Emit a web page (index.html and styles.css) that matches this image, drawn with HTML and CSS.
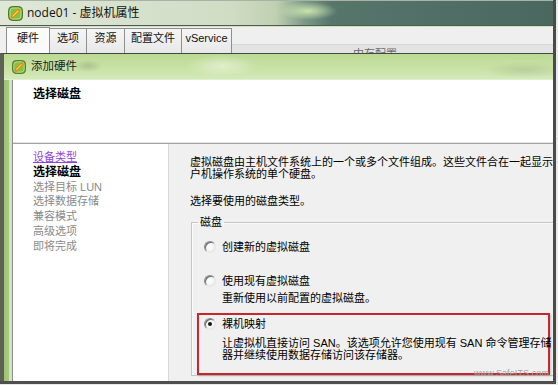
FILE: index.html
```html
<!DOCTYPE html>
<html lang="zh-CN">
<head>
<meta charset="utf-8">
<title>node01 - 虚拟机属性</title>
<link rel="stylesheet" href="styles.css">
</head>
<body>
<div class="screen">
  <div class="titlebar">
    <svg class="appicon" width="15" height="15" viewBox="0 0 15 15">
      <rect x="0.5" y="0.5" width="14" height="14" rx="4" fill="#6fa83a" stroke="#4a7a22"/>
      <rect x="2" y="2" width="11" height="11" rx="3" fill="#86c04a" stroke="#c6e59c" stroke-width="0.8"/>
      <path d="M4.2 10.8 L10.8 4.2" stroke="#e08a10" stroke-width="3.2" stroke-linecap="round"/>
      <path d="M5 10 L10 5" stroke="#ffd54a" stroke-width="1.2" stroke-linecap="round"/>
    </svg>
    <span class="title-text">node01 - 虚拟机属性</span>
  </div>
  <div class="tabstrip">
    <div class="tab active w1">硬件</div>
    <div class="tab w2">选项</div>
    <div class="tab w3">资源</div>
    <div class="tab w4">配置文件</div>
    <div class="tab w5">vService</div>
    <div class="tabpanel"><span class="ghost">内存配置</span></div>
  </div>
  <div class="inner">
    <div class="inner-title">
      <svg class="appicon" width="14" height="14" viewBox="0 0 15 15">
        <rect x="0.5" y="0.5" width="14" height="14" rx="4" fill="#6fa83a" stroke="#4a7a22"/>
        <rect x="2" y="2" width="11" height="11" rx="3" fill="#86c04a" stroke="#c6e59c" stroke-width="0.8"/>
        <path d="M4.2 10.8 L10.8 4.2" stroke="#e08a10" stroke-width="3.2" stroke-linecap="round"/>
        <path d="M5 10 L10 5" stroke="#ffd54a" stroke-width="1.2" stroke-linecap="round"/>
      </svg>
      <span class="inner-title-text">添加硬件</span>
    </div>
    <div class="inner-body">
      <div class="frame-left"></div>
      <div class="client">
        <div class="header">选择磁盘</div>
        <div class="main">
          <div class="nav">
            <div class="nav-item link">设备类型</div>
            <div class="nav-item current">选择磁盘</div>
            <div class="nav-item">选择目标 LUN</div>
            <div class="nav-item">选择数据存储</div>
            <div class="nav-item">兼容模式</div>
            <div class="nav-item">高级选项</div>
            <div class="nav-item">即将完成</div>
          </div>
          <div class="content">
            <p class="intro">虚拟磁盘由主机文件系统上的一个或多个文件组成。这些文件合在一起显示为客<br>户机操作系统的单个硬盘。</p>
            <p class="choose">选择要使用的磁盘类型。</p>
            <fieldset class="group">
              <legend>磁盘</legend>
              <div class="opt first"><span class="radio"></span><span>创建新的虚拟磁盘</span></div>
              <div class="opt second"><span class="radio"></span><span>使用现有虚拟磁盘</span></div>
              <div class="desc">重新使用以前配置的虚拟磁盘。</div>
              <div class="highlight">
                <div class="opt-in"><span class="radio on"></span><span>裸机映射</span></div>
                <div class="desc-in">让虚拟机直接访问 SAN。该选项允许您使用现有 SAN 命令管理存储<br>器并继续使用数据存储访问该存储器。</div>
              </div>
            </fieldset>
          </div>
        </div>
      </div>
    </div>
  </div>
  <div class="watermark">www.SafeITS.com</div>
</div>
</body>
</html>
```
FILE: styles.css
```css
html, body {
  margin: 0;
  padding: 0;
}
body {
  width: 558px;
  height: 385px;
  overflow: hidden;
  background: #e9e9e9;
  font-family: "Liberation Sans", "Noto Sans CJK SC", sans-serif;
  font-size: 11px;
  color: #000;
}
.screen {
  position: relative;
  width: 553px;
  height: 381px;
  border-right: 3px solid #4a4a4a;
  border-bottom: 3px solid #4f4f4f;
  display: flex;
  flex-direction: column;
  overflow: hidden;
  background: #ececec;
}
.titlebar {
  height: 25px;
  flex: none;
  box-sizing: border-box;
  border-top: 1px solid #a9b3a5;
  display: flex;
  align-items: center;
  gap: 4px;
  padding-left: 8px;
  background:
    radial-gradient(ellipse 30px 9px at 308px 10px, rgba(205,232,175,0.95), rgba(205,232,175,0) 100%),
    linear-gradient(to right, #dfe8d8 0, #d0dcc4 42%, #bfd0b0 50%, #7d9a88 55%, #56756b 60%, #4b6860 100%);
}
.appicon {
  flex: none;
  display: block;
}
.title-text {
  font-family: "Open Sans", "Noto Sans CJK SC", sans-serif;
  font-size: 12px;
  line-height: 14px;
  color: #111;
}
.tabstrip {
  height: 28px;
  flex: none;
  box-sizing: border-box;
  border-top: 1px solid #4f5b52;
  box-shadow: inset 0 1px 0 #cfe2bb;
  padding: 2px 0 0 6px;
  display: flex;
  align-items: flex-start;
  background: #efefef;
  overflow: hidden;
}
.tab {
  height: 26px;
  box-sizing: border-box;
  border: 1px solid #8d8f91;
  border-bottom: none;
  margin-right: -1px;
  text-align: center;
  line-height: 19px;
  background: linear-gradient(#f5f5f5, #e8e8e8);
  color: #111;
  flex: none;
}
.tab.active {
  background: #fbfbfb;
  margin-top: -1px;
  line-height: 21px;
  height: 27px;
}
.w1 { width: 44px; }
.w2 { width: 38px; }
.w3 { width: 39px; }
.w4 { width: 58px; }
.w5 { width: 51px; }
.tabpanel {
  flex: 1;
  align-self: stretch;
  margin-top: 16px;
  margin-left: 1px;
  background: #e3e3e3;
  border-top: 1px solid #d6d6d6;
  padding: 3px 0 0 121px;
  line-height: 12px;
  overflow: hidden;
}
.ghost {
  color: #6a6a6a;
}
.inner {
  flex: 1;
  min-height: 0;
  display: flex;
  flex-direction: column;
  border-top: 1px solid #3f4b41;
  border-left: 4px solid #5e6155;
}
.inner-title {
  height: 25px;
  flex: none;
  display: flex;
  align-items: center;
  gap: 5px;
  padding-left: 8px;
  background:
    radial-gradient(ellipse 14px 6px at 84px 12px, rgba(120,140,110,0.35), rgba(120,140,110,0) 100%),
    radial-gradient(ellipse 36px 11px at 218px 12px, rgba(235,245,220,0.7), rgba(235,245,220,0) 100%),
    radial-gradient(ellipse 40px 8px at 520px 16px, rgba(150,170,130,0.35), rgba(150,170,130,0) 100%),
    linear-gradient(#bcd994, #c8e1a5 55%, #d4e9b9);
  border-bottom: 1px solid #e2efcf;
}
.inner-title-text {
  font-size: 11.5px;
  line-height: 13px;
  color: #1a1a1a;
}
.inner-body {
  flex: 1;
  min-height: 0;
  display: flex;
}
.frame-left {
  width: 9px;
  flex: none;
  background: linear-gradient(to right, #9fc272 0, #a8c97c 5px, #d3e2c2 5px, #d3e2c2 8px, #8e8e8e 8px, #8e8e8e 9px);
}
.client {
  flex: 1;
  min-width: 0;
  display: flex;
  flex-direction: column;
}
.header {
  height: 64px;
  flex: none;
  box-sizing: border-box;
  background: #fff;
  border-bottom: 1px solid #a3a3a3;
  box-shadow: inset 0 -1px 0 #e4e4e4;
  padding: 8px 0 0 20px;
  font-weight: bold;
  font-size: 12px;
  line-height: 12px;
}
.main {
  flex: 1;
  min-height: 0;
  display: flex;
}
.nav {
  width: 156px;
  flex: none;
  box-sizing: border-box;
  background: #fff;
  border-right: 1px solid #d9d9d9;
  padding: 6px 0 0 20px;
  line-height: 14.8px;
}
.nav-item {
  color: #8a8a8a;
  white-space: nowrap;
}
.nav-item.link {
  color: #8e46da;
  text-decoration: underline;
}
.nav-item.current {
  color: #000;
  font-weight: bold;
  font-size: 12px;
}
.content {
  flex: 1;
  min-width: 0;
  background: #f0f0f0;
  padding: 12px 0 0 21px;
  line-height: 12px;
  overflow: hidden;
}
.intro {
  margin: 0;
  white-space: nowrap;
}
.choose {
  margin: 15px 0 0;
}
.group {
  margin: 9px 0 0 1px;
  width: 400px;
  padding: 0 0 0 6px;
  border: 1px solid #c6c6c6;
  box-shadow: inset 1px 1px 0 #fbfbfb;
  min-width: 0;
}
.group legend {
  padding: 0 2px;
  line-height: 12px;
}
.opt {
  display: flex;
  align-items: center;
  gap: 6px;
  margin-left: 6px;
  height: 12px;
}
.opt.first {
  margin-top: 13px;
}
.opt.second {
  margin-top: 22px;
}
.desc {
  margin: 5px 0 0 24px;
}
.radio {
  width: 12px;
  height: 12px;
  flex: none;
  box-sizing: border-box;
  border-radius: 50%;
  border: 1px solid;
  border-color: #8c8c8c #e6e6e6 #e6e6e6 #8c8c8c;
  box-shadow: inset 1px 1px 0 #6a6a6a;
  background: radial-gradient(circle at 45% 45%, #ffffff 0, #f6f6f6 45%, #dedede 100%);
  display: flex;
  align-items: center;
  justify-content: center;
}
.radio.on::after {
  content: "";
  width: 4px;
  height: 4px;
  border-radius: 50%;
  background: #151515;
}
.highlight {
  margin: 9px 0 0 -1px;
  width: 353px;
  box-sizing: border-box;
  border: 2px solid #c8262c;
  box-shadow: 1px 1px 2px rgba(0,0,0,0.2);
  padding: 3px 0 12px 5px;
}
.opt-in {
  display: flex;
  align-items: center;
  gap: 6px;
  height: 12px;
}
.desc-in {
  margin: 7px 0 0 18px;
  white-space: nowrap;
}
.watermark {
  position: absolute;
  left: 474px;
  top: 368px;
  font-family: "Liberation Sans", sans-serif;
  font-size: 9px;
  line-height: 11px;
  color: #a4a4a4;
  letter-spacing: 0.1px;
}
```
